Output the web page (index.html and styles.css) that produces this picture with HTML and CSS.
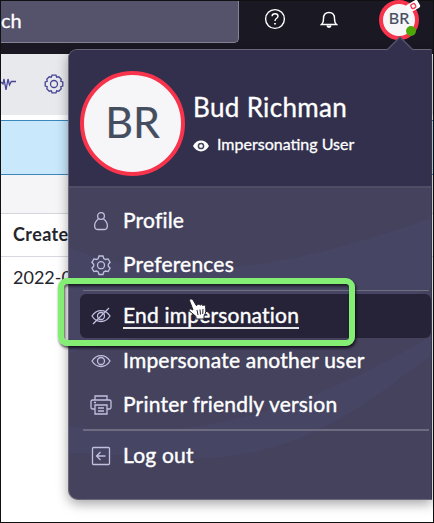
FILE: index.html
```html
<!DOCTYPE html>
<html lang="en">
<head>
<meta charset="utf-8">
<title>User menu</title>
<link rel="stylesheet" href="styles.css">
</head>
<body>
<div class="window">
  <header class="topbar">
    <div class="search">ch</div>
    <svg class="help" width="22" height="22" viewBox="0 0 22 22"><circle cx="11" cy="11" r="9.4"/><path d="M8.1 8.3C8.1 6.7 9.3 5.7 11 5.7s3 1 3 2.6c0 2-3 2.1-3 4.7"/><path d="M11 15v1.4" stroke-width="1.8"/></svg>
    <svg class="bell" width="18" height="18" viewBox="0 0 18 18"><path d="M1.5 13.5c2-1.5 2-3 2-6C3.500 3.500 5.600 1.500 9 1.500s5.500 2 5.500 6c0 3 0 4.500 2 6z"/><path d="M7 14.500c.3 2.300 3.700 2.300 4 0" fill="#fff"/></svg>
    <div class="avatar small">BR<i class="online"></i>
      <svg class="tag" width="16" height="12" viewBox="0 0 16 12"><g transform="rotate(-30 8 6)"><rect x="1.500" y="2" width="13" height="8.500" rx="2" fill="#fff"/><rect x="6" y="4" width="4.500" height="4.500" rx="1.500" fill="none" stroke="#f5354e" stroke-width="1.300"/></g></svg>
    </div>
  </header>
  <main class="page">
    <div class="toolbar">
      <svg width="16" height="18" viewBox="0 0 16 18"><path d="M0 8l2 2 1-5 2 11L7 5l1.500 6 1.800-3.500H15"/></svg>
      <svg class="gear" width="20" height="20" viewBox="0 0 20 20"><path d="M8 1.200h4l.7 2 2.100-.4 2.400 2.400-.4 2.100 2 .7v4l-2 .7.4 2.100-2.400 2.400-2.100-.4-.7 2H8l-.7-2-2.100.4-2.400-2.400.4-2.100-2-.7V8l2-.7-.4-2.100 2.400-2.400 2.100.4z"/><circle cx="10" cy="10" r="3.500"/></svg>
    </div>
    <div class="filter"></div>
    <div class="band"></div>
    <div class="cell head">Created</div>
    <div class="cell">2022-07</div>
  </main>
</div>
<nav class="menu">
  <svg class="caret" width="28" height="15" viewBox="0 0 28 15"><path d="M0 15L1.500 13.500 14 1l12.500 12.500L28 15z" fill="#32304d"/><path d="M0 13.500h1.500L14 1l12.500 12.500H28" fill="none" stroke="#55546a" stroke-width="1.300"/></svg>
  <div class="profile">
    <div class="avatar large">BR</div>
    <div class="who">
      <div class="name"><span>Bud Richman</span></div>
      <div class="status"><svg width="16" height="12" viewBox="0 0 16 12"><path d="M0 6c3.800-7.200 12.200-7.200 16 0-3.800 7.200-12.200 7.200-16 0z" fill="#fff"/><circle cx="8" cy="6" r="2.600" fill="#fff" stroke="#45425c" stroke-width="1.500"/></svg><span>Impersonating User</span></div>
    </div>
  </div>
  <div class="items">
    <svg class="waves" viewBox="0 0 363 311" preserveAspectRatio="none"><path d="M0 60C120 105 250 70 363 30V100C250 150 130 130 0 165z"/><path d="M0 238c110 17 225-8 363-90v20C330 190 270 245 190 263 110 280 60 265 0 265z"/></svg>
    <a class="item"><svg width="22" height="22" viewBox="0 0 22 22"><circle cx="11" cy="6" r="3.400"/><path d="M8.400 9C3.500 12.500 3.500 19.500 7.500 19.500h7c4 0 4-7-.9-10.500"/></svg><span>Profile</span></a>
    <a class="item"><svg width="22" height="22" viewBox="0 0 22 22"><path d="M9 2h4l.8 2.500 1.700 1 2.600-.6 2 3.400-1.800 2v1.900l1.800 2-2 3.400-2.600-.6-1.700 1L13 20.500H9l-.8-2.500-1.700-1-2.600.6-2-3.400 1.800-2v-1.900l-1.800-2 2-3.400 2.600.6 1.700-1z"/><circle cx="11" cy="11.200" r="3.500"/></svg><span>Preferences</span></a>
    <hr>
    <a class="item active"><svg width="22" height="22" viewBox="0 0 22 22"><path d="M2 11c4.500-7.300 13.500-7.300 18 0-4.500 7.300-13.500 7.300-18 0zM3 19L19 3"/><circle cx="11" cy="11" r="3.500"/></svg><span>End impersonation</span></a>
    <a class="item"><svg width="22" height="22" viewBox="0 0 22 22"><path d="M2 11c4.500-7.300 13.500-7.300 18 0-4.500 7.300-13.500 7.300-18 0z"/><circle cx="11" cy="11" r="3.500"/></svg><span>Impersonate another user</span></a>
    <a class="item"><svg width="22" height="22" viewBox="0 0 22 22"><path d="M5 6V2h12v4M5 15H2.500Q1 15 1 13.500v-6Q1 6 2.500 6h17Q21 6 21 7.500v6q0 1.500-1.500 1.500H17M5 11h12v9H5zM8 14h6M8 17h6M4 8.500h2"/></svg><span>Printer friendly version</span></a>
    <hr class="second">
    <a class="item"><svg width="22" height="22" viewBox="0 0 22 22"><rect x="2.500" y="2.500" width="17" height="17" rx="1"/><path d="M15.500 11H7M10.500 7L6.500 11l4 4"/></svg><span>Log out</span></a>
  </div>
</nav>
<div class="highlight"></div>
<svg class="pointer" width="19" height="22" viewBox="0 0 19 22"><path d="M3.300 1C1.800.8 1.300 2 1.700 3.200L5 12 3 11c-1.800-.5-2.400 1.200-1.200 2.300L8 18.500V21h8v-3c2.300-3.500 2-6 1.500-9.500-.5-1.800-2-1.800-2.600-.7-.5-1.500-2.200-1.600-2.800-.5-.8-1.300-2.200-1.200-2.800-.2L8.300 7.500 5 2Q4.300 1 3.300 1z" fill="#fff" stroke="#24222f"/><path d="M9 12l1 5M12 11.500l.5 5M15 11l-.3 5" stroke="#24222f" fill="none"/></svg>
</body>
</html>
```
FILE: styles.css
```css
* { box-sizing: border-box; }
body {
  margin: 0;
  width: 434px;
  height: 523px;
  overflow: hidden;
  position: relative;
  font-family: Lato, "Liberation Sans", sans-serif;
  color: #fff;
}
.window {
  height: 523px;
  border: 1px solid #111;
  background: #fff;
}
.topbar {
  height: 53px;
  background: #191823;
  display: flex;
  align-items: flex-start;
}
.search {
  width: 238px;
  height: 42px;
  background: #55526b;
  border: 1px solid #858394;
  border-width: 0 1px 1px 0;
  border-radius: 0 0 5px 0;
  font-size: 20px;
  line-height: 38px;
  -webkit-text-stroke: .3px;
}
.topbar > svg { fill: none; stroke: #fff; stroke-width: 1.4; }
.help { margin: 7px 0 0 25px; }
.bell { margin: 10px 0 0 34px; }
.avatar {
  border-radius: 50%;
  background: #f6f6f9;
  border: 4px solid #f8334c;
  color: #454e5e;
  text-align: center;
  -webkit-text-stroke: .2px;
}
.small {
  position: relative;
  width: 40px;
  height: 40px;
  margin: -1px 0 0 41px;
  font-size: 16px;
  line-height: 28px;
}
.online {
  position: absolute;
  right: -1px;
  bottom: 0;
  width: 10px;
  height: 10px;
  border-radius: 50%;
  background: #4ba606;
}
.tag { position: absolute; right: -6px; top: -4px; }
.toolbar {
  height: 61px;
  background: #e8e9ed;
  display: flex;
  padding-top: 20px;
}
.toolbar svg { fill: none; stroke: #474595; stroke-width: 1.3; }
.toolbar .gear { margin-left: 27px; }
.filter {
  height: 55px;
  margin-top: 5px;
  background: #c9e8fc;
  border: 1px solid #3987bb;
  border-width: 1px 0;
}
.band { height: 39px; background: #f5f5f7; border-bottom: 1px solid #d4d5dc; }
.cell {
  height: 43px;
  padding-left: 12px;
  line-height: 41px;
  color: #25252d;
  border-bottom: 1px solid #d8d9df;
  font-size: 18px;
}
.cell + .cell { border: 0; line-height: 41px; }
.head { font-weight: 700; letter-spacing: .4px; }
.menu {
  position: absolute;
  left: 68px;
  top: 49px;
  width: 364px;
  height: 451px;
  border: 1px solid #696779;
  border-right-color: #38364a;
  border-radius: 9px 0 0 10px;
  background: #44425d;
  box-shadow: 0 4px 12px rgba(0, 0, 0, .35);
}
.caret { position: absolute; left: 317px; top: -14px; }
.profile {
  height: 138px;
  background: #32304d;
  border-bottom: 2px solid #504e67;
  border-radius: 8px 0 0 0;
  display: flex;
  padding: 21px 0 0 11px;
}
.large {
  width: 105px;
  height: 105px;
  font-size: 43px;
  line-height: 94px;
}
.who { margin-left: 8px; padding-top: 17px; }
.name {
  height: 38px;
  font-size: 26px;
  line-height: 39px;
  letter-spacing: .35px;
  -webkit-text-stroke: .35px;
}
.status {
  height: 36px;
  display: flex;
  align-items: center;
  gap: 8px;
  font-size: 16px;
  -webkit-text-stroke: .3px;
}
.status svg { position: relative; top: 2px; }
.status span { line-height: 20px; }
.items { position: relative; padding-top: 11px; height: 311px; }
.waves {
  position: absolute;
  left: 0;
  top: 0;
  width: 362px;
  height: 311px;
  fill: #484767;
  opacity: .6;
}
.item {
  position: relative;
  display: flex;
  align-items: center;
  gap: 11px;
  height: 44px;
  margin-left: 11px;
  padding-left: 10px;
  border-radius: 6px;
  font-size: 21px;
  letter-spacing: .2px;
  white-space: nowrap;
}
.item svg { fill: none; stroke: #c2c0e0; stroke-width: 1.3; }
.item span { line-height: 26px; padding-bottom: 2px; -webkit-text-stroke: .4px; }
.active { background: #262338; margin-bottom: 1px; }
.item.active span {
  border-bottom: 2px solid #e6e6eb;
  line-height: 24px;
  padding-bottom: 0;
}
hr {
  position: relative;
  height: 1px;
  margin: 3px 2px 3px 14px;
  border: 0;
  background: #727080;
}
.second { height: 2px; margin: 2px 2px 3px 14px; background: #6d6b80; }
.highlight {
  position: absolute;
  left: 58px;
  top: 278px;
  width: 297px;
  height: 68px;
  border: 6px solid #84ed73;
  border-radius: 9px;
  box-shadow: 1px 2px 3px rgba(0, 0, 0, .75), inset 1px 2px 3px rgba(0, 0, 0, .65);
}
.pointer { position: absolute; left: 188px; top: 298px; }
```
